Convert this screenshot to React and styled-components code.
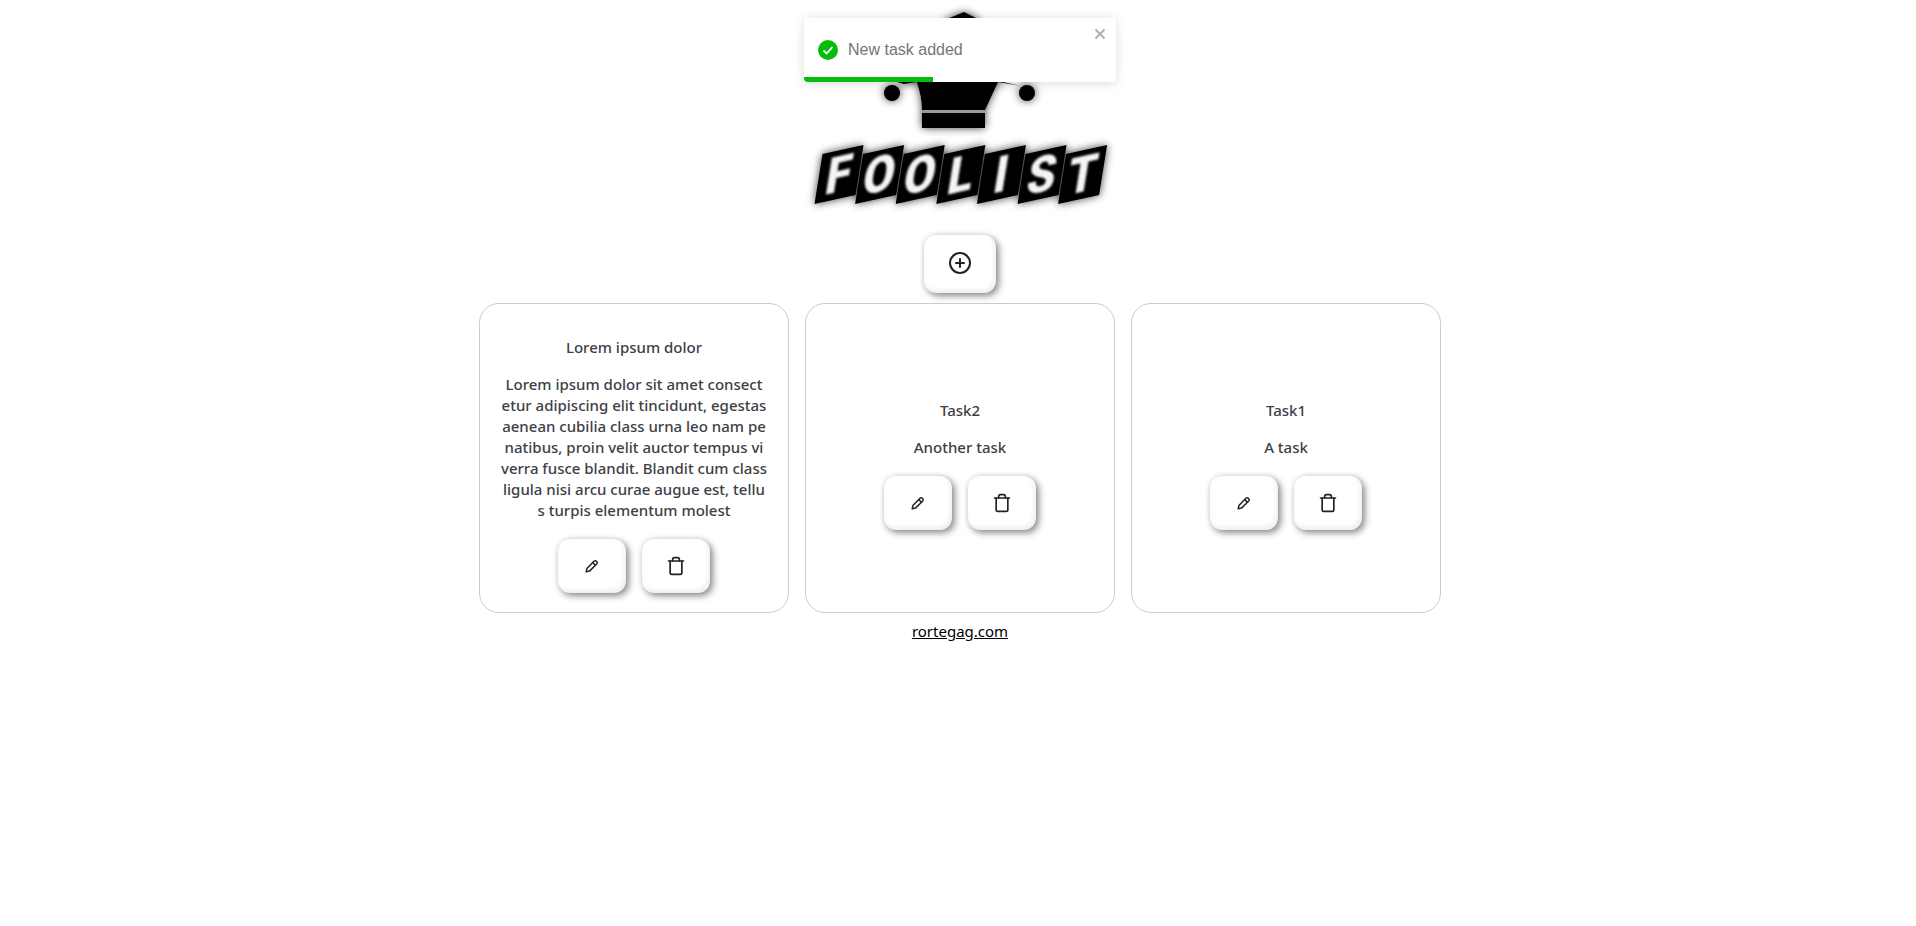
import React from "react";
import styled, { createGlobalStyle } from "styled-components";
import { CirclePlus, Trash } from "lucide-react";

const Global = createGlobalStyle`
  html, body { margin: 0; padding: 0; background: #fff; }
  body { font-family: "Noto Sans", "Open Sans", sans-serif; overflow-x: hidden; }
`;
const Page = styled.main`
  width: 1920px;
  display: flex;
  flex-direction: column;
  align-items: center;
`;
const LogoSvg = styled.svg`
  display: block;
  width: 300px;
  height: 220px;
  margin-bottom: 15px;
  filter: drop-shadow(0 0 4px rgba(0,0,0,.75));
`;
const RaisedButton = styled.button`
  width: ${p => p.$w}px;
  height: ${p => p.$h}px;
  display: flex;
  align-items: center;
  justify-content: center;
  padding: 0 0 ${p => p.$lift || 0}px;
  border: 0;
  border-radius: 12px;
  background: #fff;
  color: #222;
  box-shadow: 3px 3px 7px rgba(0,0,0,.42), 0 0 6px rgba(0,0,0,.12), inset -2px -3px 5px rgba(0,0,0,.07);
`;
const Grid = styled.section`
  display: grid;
  grid-template-columns: repeat(3, 310px);
  gap: 16px;
  margin-top: 10px;
`;
const Card = styled.article`
  box-sizing: border-box;
  height: 310px;
  padding-top: 13px;
  border: 1px solid #ccc;
  border-radius: 20px;
  display: flex;
  flex-direction: column;
  align-items: center;
  justify-content: center;
  text-align: center;
  color: #3d4045;
  font-size: 15px;
  line-height: 21px;
  font-weight: 500;
`;
const Title = styled.h2`
  font: inherit;
  margin: 0 0 16px;
`;
const Body = styled.p`
  margin: 0 0 18px;
`;
const Actions = styled.div`
  display: flex;
  gap: 16px;
`;
const FooterLink = styled.a`
  margin-top: 7px;
  color: #000;
  font-size: 15px;
  line-height: 22px;
  text-decoration: underline;
`;
const Toast = styled.div`
  position: absolute;
  top: 18px;
  left: 804px;
  width: 312px;
  height: 64px;
  box-sizing: border-box;
  padding: 0 14px;
  display: flex;
  align-items: center;
  gap: 10px;
  background: #fff;
  border-radius: 4px;
  box-shadow: 0 1px 10px rgba(0,0,0,.1), 0 2px 15px rgba(0,0,0,.05);
  color: #757575;
  font-family: "Liberation Sans", Arial, sans-serif;
  font-size: 16px;
  overflow: hidden;
`;
const ToastClose = styled.span`
  position: absolute;
  top: 9px;
  right: 9px;
  color: #b0b0b0;
  display: flex;
`;
const Progress = styled.div`
  position: absolute;
  left: 0;
  bottom: 0;
  height: 5px;
  background: #07bc0c;
`;

const Logo = () => {
  const letters = "FOOLIST".split("");
  return (
    <LogoSvg viewBox="810 0 300 220">
      <defs>
        <filter id="soft" x="-20%" y="-20%" width="140%" height="140%">
          <feGaussianBlur stdDeviation="1.3" />
        </filter>
      </defs>
      <path d="M964 12 L947 19 L932 60 L897 82 L904 84 L917 82 C920 92 922 100 922 110 L985 110 L998 82 L1021 86 L1003 82 L990 60 L978 19 Z" fill="#000" />
      <circle cx="892" cy="93" r="8" fill="#000" />
      <circle cx="1027" cy="93" r="8" fill="#000" />
      <rect x="922" y="110" width="63" height="3" fill="#999" />
      <rect x="922" y="113" width="63" height="15" fill="#000" />
      {letters.map((l, i) => {
        const d = 40.6 * i;
        return (
          <polygon key={i} fill="#000" points={`${822.5 + d},154 ${863.5 + d},145 ${855.5 + d},195 ${814.5 + d},204`} />
        );
      })}
      <g filter="url(#soft)">
        {letters.map((l, i) => (
          <text
            key={i}
            transform={`translate(${839 + 40.6 * i} 174.5) skewY(-12.7) skewX(-9.6) scale(0.98 1.06)`}
            textAnchor="middle"
            dominantBaseline="central"
            fontFamily="Roboto, sans-serif"
            fontWeight="900"
            fontSize="47"
            fill="#f4f4f4"
          >{l}</text>
        ))}
      </g>
    </LogoSvg>
  );
};

const PencilIcon = () => (
  <svg width="16" height="16" viewBox="0 0 16 16" fill="none" stroke="currentColor" strokeWidth="1.5" strokeLinejoin="round" strokeLinecap="round">
    <path d="M2.2 13.8 L2.9 10.6 L10 3.3 a1.7 1.7 0 0 1 2.4 0 l.3 .3 a1.7 1.7 0 0 1 0 2.4 L5.5 13.1 Z" />
    <path d="M8.8 4.6 L11.4 7.2" />
  </svg>
);

const Task = ({ title, lines }) => (
  <Card>
    <Title>{title}</Title>
    <Body>{lines.map((t, i) => <React.Fragment key={i}>{i > 0 && <br />}{t}</React.Fragment>)}</Body>
    <Actions>
      <RaisedButton $w={68} $h={54}><PencilIcon /></RaisedButton>
      <RaisedButton $w={68} $h={54}><Trash size={20} strokeWidth={2} /></RaisedButton>
    </Actions>
  </Card>
);

export default function App() {
  return (
    <>
      <Global />
      <Page>
        <Logo />
        <RaisedButton $w={72} $h={58} $lift={2}><CirclePlus size={24} strokeWidth={2} /></RaisedButton>
        <Grid>
          <Task title="Lorem ipsum dolor" lines={[
            "Lorem ipsum dolor sit amet consect",
            "etur adipiscing elit tincidunt, egestas",
            "aenean cubilia class urna leo nam pe",
            "natibus, proin velit auctor tempus vi",
            "verra fusce blandit. Blandit cum class",
            "ligula nisi arcu curae augue est, tellu",
            "s turpis elementum molest",
          ]} />
          <Task title="Task2" lines={["Another task"]} />
          <Task title="Task1" lines={["A task"]} />
        </Grid>
        <FooterLink href="#">rortegag.com</FooterLink>
      </Page>
      <Toast>
        <svg width="20" height="20" viewBox="0 0 20 20">
          <circle cx="10" cy="10" r="10" fill="#07bc0c" />
          <path d="M5.5 10.5 L8.6 13.5 L14.5 7" fill="none" stroke="#fff" strokeWidth="1.8" />
        </svg>
        New task added
        <ToastClose>
          <svg width="14" height="14" viewBox="0 0 14 14"><path d="M2.5 2.5 L11.5 11.5 M11.5 2.5 L2.5 11.5" stroke="currentColor" strokeWidth="2" /></svg>
        </ToastClose>
        <Progress style={{ width: "41.5%" }} />
      </Toast>
    </>
  );
}
